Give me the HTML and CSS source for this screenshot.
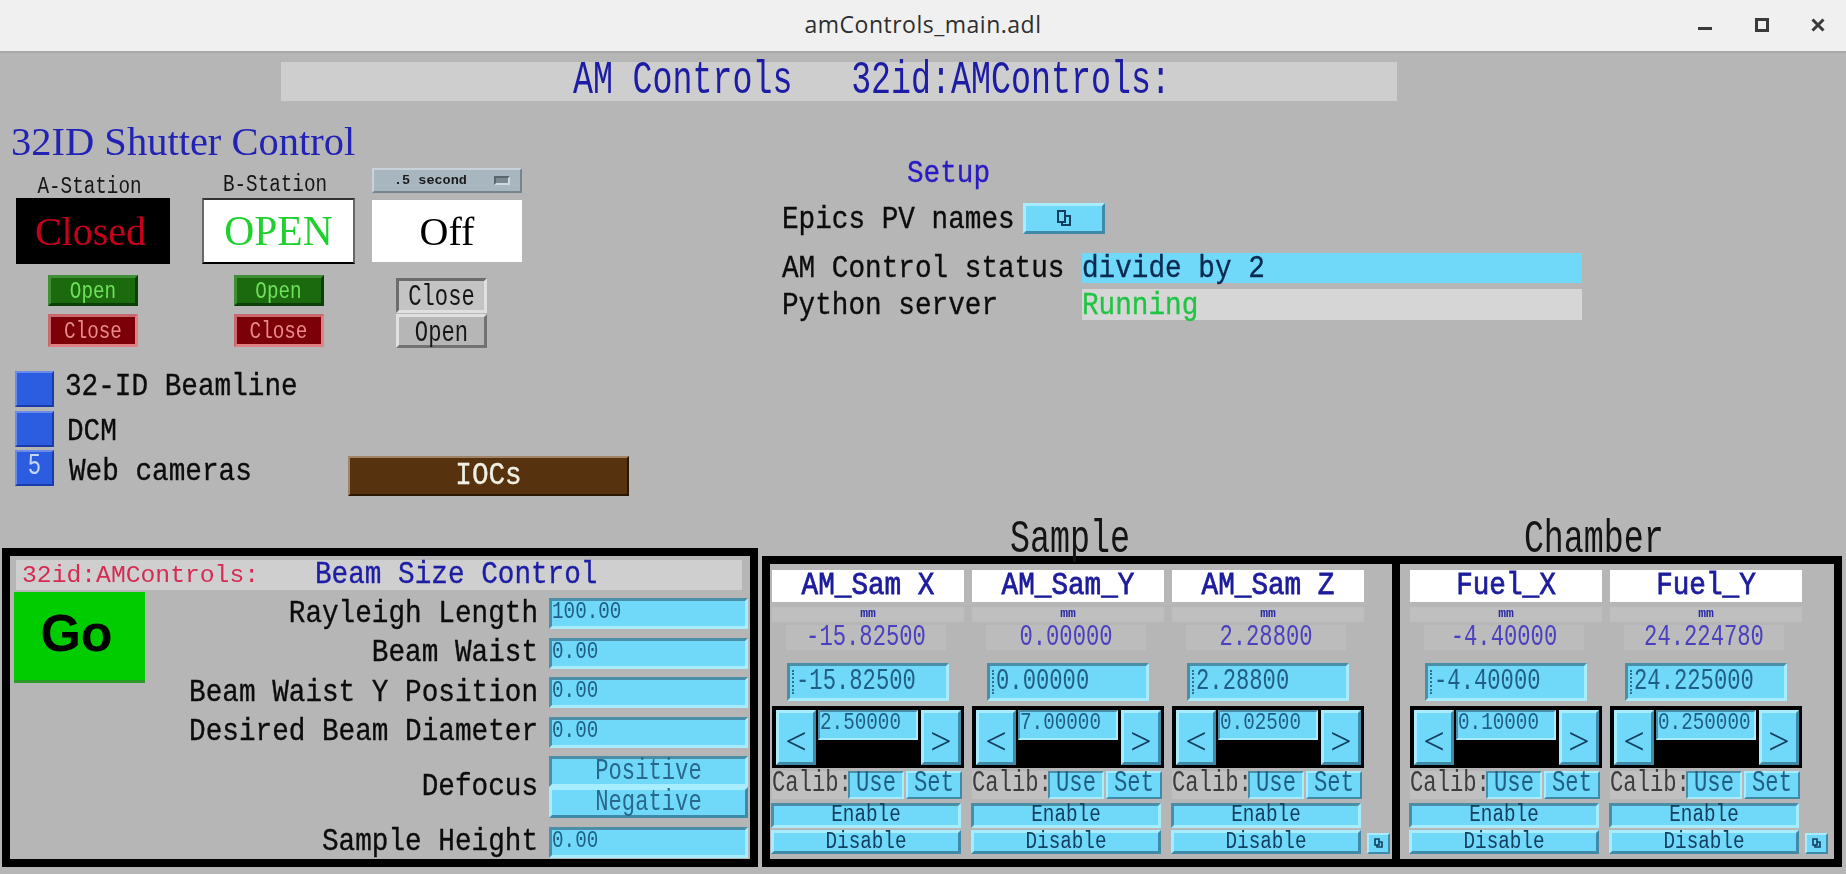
FILE: index.html
```html
<!DOCTYPE html>
<html>
	<head>
		<title>amControls_main.adl</title>
		<link rel="stylesheet" href="styles.css">
	</head>
	<body>
		<div class="titlebar">
			<span class="title-text">amControls_main.adl</span>
			<div class="win-buttons">
				<svg width="14" height="14" viewBox="0 0 14 14"><rect x="0" y="9" width="14" height="3" fill="#3a3a3a"/></svg>
				<svg width="14" height="14" viewBox="0 0 14 14"><rect x="1.5" y="1.5" width="11" height="11" fill="none" stroke="#3a3a3a" stroke-width="3"/></svg>
				<svg width="14" height="14" viewBox="0 0 14 14"><path d="M1.5 1.5 12.5 12.5M12.5 1.5 1.5 12.5" stroke="#3a3a3a" stroke-width="3"/></svg>
			</div>
		</div>

		<div class="screen">
			<div class="banner"><span class="txt txt-xl">AM Controls   32id:AMControls:</span></div>

			<div class="upper">
				<div class="upper-left">
					<h1 class="shutter-title">32ID Shutter Control</h1>
					<div class="stations">
						<div class="station station-a">
							<div class="station-label"><span class="txt txt-s">A-Station</span></div>
							<div class="status-box box-closed">Closed</div>
							<div class="btn btn-green"><span class="txt txt-s">Open</span></div>
							<div class="btn btn-red"><span class="txt txt-s">Close</span></div>
						</div>
						<div class="station station-b">
							<div class="station-label"><span class="txt txt-s">B-Station</span></div>
							<div class="status-box box-open">OPEN</div>
							<div class="btn btn-green"><span class="txt txt-s">Open</span></div>
							<div class="btn btn-red"><span class="txt txt-s">Close</span></div>
						</div>
						<div class="station station-c">
							<div class="time-menu">
								<span class="time-text">.5 second</span>
								<span class="menu-mark"></span>
							</div>
							<div class="status-box box-off">Off</div>
							<div class="btn btn-grey btn-grey-in"><span class="txt txt-m">Close</span></div>
							<div class="btn btn-grey"><span class="txt txt-m">Open</span></div>
						</div>
					</div>
					<div class="links">
						<div class="link-list">
							<div class="link-row">
								<div class="blue-btn"></div>
								<span class="link-label link-label-1"><span class="txt txt-l">32-ID Beamline</span></span>
							</div>
							<div class="link-row link-row-mid">
								<div class="blue-btn"></div>
								<span class="link-label link-label-2"><span class="txt txt-l">DCM</span></span>
							</div>
							<div class="link-row">
								<div class="blue-btn"><span class="txt txt-m">5</span></div>
								<span class="link-label link-label-3"><span class="txt txt-l">Web cameras</span></span>
							</div>
						</div>
						<div class="iocs-btn"><span class="txt txt-l">IOCs</span></div>
					</div>
				</div>

				<div class="setup">
					<div class="setup-title"><span class="txt txt-l">Setup</span></div>
					<div class="setup-row setup-epics">
						<div class="setup-label setup-label-short"><span class="txt txt-l">Epics PV names</span></div>
						<div class="cyan-out setup-btn">
							<svg width="20" height="20" viewBox="0 0 20 20"><path d="M4 2h7v11H4zM11 7h5v9H8v-3" fill="none" stroke="#123e60" stroke-width="2"/></svg>
						</div>
					</div>
					<div class="setup-row setup-status">
						<div class="setup-label"><span class="txt txt-l">AM Control status</span></div>
						<div class="field field-cyan"><span class="txt txt-l">divide by 2</span></div>
					</div>
					<div class="setup-row setup-python">
						<div class="setup-label"><span class="txt txt-l">Python server</span></div>
						<div class="field field-grey"><span class="txt txt-l">Running</span></div>
					</div>
				</div>
			</div>

			<div class="lower">
				<div class="beam-panel">
					<div class="beam-head">
						<span class="beam-prefix">32id:AMControls:</span>
						<span class="beam-name"><span class="txt txt-l">Beam Size Control</span></span>
					</div>
					<div class="beam-body">
						<div class="go-btn">Go</div>
						<div class="beam-form">
							<div class="form-label"><span class="txt txt-l">Rayleigh Length</span></div>
							<div class="cyan-in form-input"><span class="txt txt-s">100.00</span></div>
							<div class="form-label"><span class="txt txt-l">Beam Waist</span></div>
							<div class="cyan-in form-input"><span class="txt txt-s">0.00</span></div>
							<div class="form-label"><span class="txt txt-l">Beam Waist Y Position</span></div>
							<div class="cyan-in form-input"><span class="txt txt-s">0.00</span></div>
							<div class="form-label"><span class="txt txt-l">Desired Beam Diameter</span></div>
							<div class="cyan-in form-input"><span class="txt txt-s">0.00</span></div>
							<div class="form-label"><span class="txt txt-l">Defocus</span></div>
							<div class="defocus">
								<div class="cyan-in defocus-btn"><span class="txt txt-m">Positive</span></div>
								<div class="cyan-out defocus-btn"><span class="txt txt-m">Negative</span></div>
							</div>
							<div class="form-label"><span class="txt txt-l">Sample Height</span></div>
							<div class="cyan-in form-input"><span class="txt txt-s">0.00</span></div>
						</div>
					</div>
				</div>

				<div class="motors">
					<div class="motor-headings">
						<div class="heading heading-sample"><span class="txt txt-xl">Sample</span></div>
						<div class="heading heading-chamber"><span class="txt txt-xl">Chamber</span></div>
					</div>
					<div class="motor-panel">
						<div class="motor-group group-sample">
							<div class="motor">
								<div class="motor-name"><span class="txt txt-l">AM_Sam X</span></div>
								<div class="motor-units">mm</div>
								<div class="motor-rbv"><span class="txt txt-m">-15.82500</span></div>
								<div class="cyan-in motor-input"><span class="cursor"></span><span class="txt txt-m">-15.82500</span></div>
								<div class="tweak">
									<div class="cyan-out tweak-btn">&lt;</div>
									<div class="cyan-in tweak-val"><span class="txt txt-s">2.50000</span></div>
									<div class="cyan-out tweak-btn">&gt;</div>
								</div>
								<div class="calib">
									<div class="calib-label"><span class="txt txt-m">Calib:</span></div>
									<div class="cyan-in calib-btn"><span class="txt txt-m">Use</span></div>
									<div class="cyan-out calib-btn calib-set"><span class="txt txt-m">Set</span></div>
								</div>
								<div class="cyan-in wide-btn btn-enable"><span class="txt txt-s">Enable</span></div>
								<div class="cyan-out wide-btn btn-disable"><span class="txt txt-s">Disable</span></div>
							</div>
							<div class="motor">
								<div class="motor-name"><span class="txt txt-l">AM_Sam_Y</span></div>
								<div class="motor-units">mm</div>
								<div class="motor-rbv"><span class="txt txt-m">0.00000</span></div>
								<div class="cyan-in motor-input"><span class="cursor"></span><span class="txt txt-m">0.00000</span></div>
								<div class="tweak">
									<div class="cyan-out tweak-btn">&lt;</div>
									<div class="cyan-in tweak-val"><span class="txt txt-s">7.00000</span></div>
									<div class="cyan-out tweak-btn">&gt;</div>
								</div>
								<div class="calib">
									<div class="calib-label"><span class="txt txt-m">Calib:</span></div>
									<div class="cyan-in calib-btn"><span class="txt txt-m">Use</span></div>
									<div class="cyan-out calib-btn calib-set"><span class="txt txt-m">Set</span></div>
								</div>
								<div class="cyan-in wide-btn btn-enable"><span class="txt txt-s">Enable</span></div>
								<div class="cyan-out wide-btn btn-disable"><span class="txt txt-s">Disable</span></div>
							</div>
							<div class="motor">
								<div class="motor-name"><span class="txt txt-l">AM_Sam Z</span></div>
								<div class="motor-units">mm</div>
								<div class="motor-rbv"><span class="txt txt-m">2.28800</span></div>
								<div class="cyan-in motor-input"><span class="cursor"></span><span class="txt txt-m">2.28800</span></div>
								<div class="tweak">
									<div class="cyan-out tweak-btn">&lt;</div>
									<div class="cyan-in tweak-val"><span class="txt txt-s">0.02500</span></div>
									<div class="cyan-out tweak-btn">&gt;</div>
								</div>
								<div class="calib">
									<div class="calib-label"><span class="txt txt-m">Calib:</span></div>
									<div class="cyan-in calib-btn"><span class="txt txt-m">Use</span></div>
									<div class="cyan-out calib-btn calib-set"><span class="txt txt-m">Set</span></div>
								</div>
								<div class="cyan-in wide-btn btn-enable"><span class="txt txt-s">Enable</span></div>
								<div class="cyan-out wide-btn btn-disable"><span class="txt txt-s">Disable</span></div>
							</div>
							<div class="cyan-out small-btn">
								<svg width="11" height="11" viewBox="0 0 11 11"><path d="M2 1h4v6H2zM6 4h3v5H4V7" fill="none" stroke="#123e60" stroke-width="1.6"/></svg>
							</div>
						</div>
						<div class="motor-group group-chamber">
							<div class="motor">
								<div class="motor-name"><span class="txt txt-l">Fuel_X</span></div>
								<div class="motor-units">mm</div>
								<div class="motor-rbv"><span class="txt txt-m">-4.40000</span></div>
								<div class="cyan-in motor-input"><span class="cursor"></span><span class="txt txt-m">-4.40000</span></div>
								<div class="tweak">
									<div class="cyan-out tweak-btn">&lt;</div>
									<div class="cyan-in tweak-val"><span class="txt txt-s">0.10000</span></div>
									<div class="cyan-out tweak-btn">&gt;</div>
								</div>
								<div class="calib">
									<div class="calib-label"><span class="txt txt-m">Calib:</span></div>
									<div class="cyan-in calib-btn"><span class="txt txt-m">Use</span></div>
									<div class="cyan-out calib-btn calib-set"><span class="txt txt-m">Set</span></div>
								</div>
								<div class="cyan-in wide-btn btn-enable"><span class="txt txt-s">Enable</span></div>
								<div class="cyan-out wide-btn btn-disable"><span class="txt txt-s">Disable</span></div>
							</div>
							<div class="motor">
								<div class="motor-name"><span class="txt txt-l">Fuel_Y</span></div>
								<div class="motor-units">mm</div>
								<div class="motor-rbv"><span class="txt txt-m">24.224780</span></div>
								<div class="cyan-in motor-input"><span class="cursor"></span><span class="txt txt-m">24.225000</span></div>
								<div class="tweak">
									<div class="cyan-out tweak-btn">&lt;</div>
									<div class="cyan-in tweak-val"><span class="txt txt-s">0.250000</span></div>
									<div class="cyan-out tweak-btn">&gt;</div>
								</div>
								<div class="calib">
									<div class="calib-label"><span class="txt txt-m">Calib:</span></div>
									<div class="cyan-in calib-btn"><span class="txt txt-m">Use</span></div>
									<div class="cyan-out calib-btn calib-set"><span class="txt txt-m">Set</span></div>
								</div>
								<div class="cyan-in wide-btn btn-enable"><span class="txt txt-s">Enable</span></div>
								<div class="cyan-out wide-btn btn-disable"><span class="txt txt-s">Disable</span></div>
							</div>
							<div class="cyan-out small-btn">
								<svg width="11" height="11" viewBox="0 0 11 11"><path d="M2 1h4v6H2zM6 4h3v5H4V7" fill="none" stroke="#123e60" stroke-width="1.6"/></svg>
							</div>
						</div>
					</div>
				</div>
			</div>
		</div>
	</body>
</html>
```

FILE: styles.css
```css
* {
	box-sizing: border-box;
}
html,body {
	width: 100%;
	height: 100%;
}
body {
	margin: 0;
	overflow: hidden;
	background-color: #b6b6b6;
	color: #000;
	font-family: "Liberation Mono", monospace;
	filter: blur(0.5px);
}

/* text from the control screen is narrow and tall, so it gets stretched */
.txt {
	display: inline-block;
	white-space: pre;
	line-height: 1;
}
.txt-s {
	font-size: 19.3px;
	transform: scaleY(1.25);
}
.txt-m {
	font-size: 22.2px;
	transform: scaleY(1.35);
}
.txt-l {
	font-size: 27.7px;
	transform: scaleY(1.15);
	-webkit-text-stroke: 0.3px currentColor;
}
.txt-xl {
	font-size: 33.3px;
	transform: scaleY(1.38);
	word-spacing: -0.4px;
}

/* window title */
.titlebar {
	height: 53px;
	background-color: #f0f0f0;
	border-bottom: 2px solid #a9a9a9;
	display: flex;
	align-items: center;
	justify-content: center;
	position: relative;
}
.title-text {
	font-family: "Open Sans", sans-serif;
	font-size: 23px;
	letter-spacing: 0.5px;
	color: #2e2e2e;
	margin-top: -3px;
}
.win-buttons {
	position: absolute;
	top: 18px;
	right: 21px;
	display: flex;
	gap: 42.5px;
}

.banner {
	margin: 9px 0 0 281px;
	width: 1116px;
	height: 39px;
	background-color: #cecece;
	color: #1c1ca4;
	display: flex;
	align-items: center;
	padding-left: 292px;
}

/* top half */
.upper {
	height: 414px;
	display: flex;
}
.upper-left {
	width: 782px;
	padding-left: 16px;
}
.shutter-title {
	margin: 21px 0 0 -5px;
	height: 40px;
	font-family: "Liberation Serif", serif;
	font-weight: normal;
	font-size: 40.5px;
	line-height: 40px;
	color: #2222b4;
	white-space: nowrap;
}
.stations {
	margin-top: 6px;
	display: flex;
}
.station {
	display: flex;
	flex-direction: column;
	align-items: center;
}
.station-a {
	width: 154px;
	margin-right: 32px;
}
.station-b {
	width: 153px;
	margin-right: 17px;
}
.station-c {
	width: 150px;
}
.station-label {
	height: 30px;
	padding-top: 8px;
	margin-right: 7px;
	color: #161616;
}
.station-a .station-label {
	padding-top: 10px;
}
.status-box {
	width: 100%;
	height: 66px;
	font-family: "Liberation Serif", serif;
	font-size: 40px;
	display: flex;
	align-items: center;
	justify-content: center;
}
.box-closed {
	background-color: #000;
	color: #c4001c;
	padding-right: 5px;
}
.box-open {
	background-color: #fff;
	color: #1fd02f;
	font-size: 41.5px;
	border: 2px solid #000;
	border-top-color: #333;
	border-left-color: #666;
	border-right-color: #666;
}
.box-off {
	background-color: #fff;
	color: #000;
	height: 62px;
	margin-top: 7px;
}
.time-menu {
	width: 100%;
	height: 25px;
	background-color: #a8b6c0;
	border: 2px solid;
	border-color: #c8d2d8 #76848e #76848e #c8d2d8;
	display: flex;
	align-items: center;
	padding: 0 10px 0 20px;
	justify-content: space-between;
}
.time-text {
	font-size: 13.5px;
	font-weight: bold;
	white-space: pre;
	color: #1a1a1a;
}
.menu-mark {
	width: 16px;
	height: 9px;
	background-color: #7c8890;
	border: 2px solid;
	border-color: #5a666e #d0d8de #d0d8de #5a666e;
}
.btn {
	height: 32px;
	width: 90px;
	border: 3px solid;
	display: flex;
	align-items: center;
	justify-content: center;
	padding-top: 4px;
}
.btn-green {
	margin-top: 11px;
	height: 31px;
	background-color: #1b6a0e;
	border-color: #3f8f35 #0c3e08 #0c3e08 #3f8f35;
	color: #6fe05c;
}
.btn-red {
	margin-top: 8px;
	height: 33px;
	background-color: #7c0008;
	border-color: #c8686c #e08084 #e08084 #c8686c;
	color: #e88a8c;
}
.btn-grey {
	width: 91px;
	height: 34px;
	margin: 1px 11px 0 0;
	background-color: #b6b6b6;
	border-color: #e0e0e0 #727272 #727272 #e0e0e0;
	color: #161616;
	padding-top: 6px;
}
.btn-grey-in {
	height: 35px;
	margin-top: 16px;
	background-color: #c4c4c4;
	border-color: #6c6c6c #e0e0e0 #e0e0e0 #6c6c6c;
}
.links {
	margin-top: 23px;
	display: flex;
}
.link-list {
	width: 333px;
	margin-left: -1px;
}
.link-row {
	height: 36px;
	margin-bottom: 4px;
	display: flex;
}
.link-row-mid {
	margin-bottom: 3px;
}
.blue-btn {
	width: 39px;
	height: 36px;
	background-color: #2c5ce0;
	border: 2px solid;
	border-color: #6a8ce8 #1a3ca8 #1a3ca8 #6a8ce8;
	color: #c4d8ff;
	text-align: center;
	padding-top: 4px;
}
.link-label {
	color: #0c0c0c;
}
.link-label-1 {
	margin: 2px 0 0 11px;
}
.link-label-2 {
	margin: 7px 0 0 13px;
}
.link-label-3 {
	margin: 8px 0 0 15px;
}
.iocs-btn {
	margin-top: 85px;
	width: 281px;
	height: 40px;
	background-color: #56320f;
	border: 2px solid;
	border-color: #a08468 #2a1604 #2a1604 #a08468;
	color: #f2f0e4;
	display: flex;
	align-items: center;
	justify-content: center;
}

/* setup block */
.setup {
	width: 800px;
}
.setup-title {
	margin: 59px 0 0 125px;
	height: 27px;
	color: #2a1ac4;
}
.setup-row {
	display: flex;
	align-items: center;
}
.setup-epics {
	margin-top: 16px;
	height: 31px;
}
.setup-status {
	margin-top: 19px;
	height: 30px;
}
.setup-python {
	margin-top: 6px;
	height: 31px;
}
.setup-label {
	width: 300px;
	color: #0c0c0c;
	padding-top: 2px;
}
.setup-label-short {
	width: 241px;
}
.setup-btn {
	width: 82px;
	height: 31px;
	display: flex;
	align-items: center;
	justify-content: center;
}
.field {
	width: 500px;
	height: 100%;
	display: flex;
	align-items: center;
	padding-top: 2px;
}
.field-cyan {
	background-color: #70d8f8;
	color: #0a2a50;
}
.field-grey {
	background-color: #d6d6d6;
	color: #20c444;
}

/* cyan widgets: in is a text entry, out is a button */
.cyan-in, .cyan-out {
	background-color: #70d8f8;
	border: 3px solid;
}
.cyan-in {
	border-color: #4a8ea8 #a8ecff #a8ecff #4a8ea8;
	color: #1f5f85;
}
.cyan-out {
	border-color: #a8ecff #3f8aa8 #3f8aa8 #a8ecff;
	color: #123e60;
}

/* bottom half */
.lower {
	height: 352px;
	display: flex;
	align-items: flex-end;
	padding-left: 2px;
}
.beam-panel {
	width: 756px;
	height: 319px;
	border: 8px solid #000;
	padding: 4px 0 0 6px;
}
.beam-head {
	width: 726px;
	height: 30px;
	background-color: #cfcfcf;
	display: flex;
	align-items: center;
	padding-left: 6px;
}
.beam-prefix {
	width: 293px;
	font-size: 24.7px;
	color: #d62a52;
}
.beam-name {
	color: #1c1ca4;
}
.beam-body {
	display: flex;
	margin-top: 2px;
}
.go-btn {
	width: 131px;
	height: 91px;
	margin-left: -2px;
	background-color: #00cc00;
	border-bottom: 3px solid #2a9a2a;
	font-family: "Liberation Sans", sans-serif;
	font-weight: bold;
	font-size: 52px;
	display: flex;
	align-items: center;
	justify-content: center;
	padding-right: 6px;
	padding-bottom: 6px;
}
.beam-form {
	width: 603px;
	margin-top: 6px;
	display: grid;
	grid-template-columns: 1fr 199px;
	column-gap: 11px;
	row-gap: 8.5px;
}
.form-label {
	align-self: center;
	text-align: right;
	color: #0c0c0c;
	height: 28px;
}
.form-input {
	height: 31px;
	padding-left: 0;
	line-height: 24px;
}
.defocus-btn {
	height: 31px;
	display: flex;
	align-items: center;
	justify-content: center;
	color: #28688c;
	padding-top: 2px;
}
.motors {
	width: 1080px;
	margin-left: 4px;
}
.motor-headings {
	height: 41px;
	display: flex;
	color: #141414;
}
.heading {
	padding-top: 9px;
}
.heading-sample {
	margin-left: 248px;
}
.heading-chamber {
	margin-left: 394px;
}
.motor-panel {
	height: 311px;
	border: 8px solid #000;
	display: flex;
}
.motor-group {
	display: flex;
	align-items: flex-start;
	height: 100%;
}
.group-sample {
	width: 630px;
	padding-left: 2px;
	border-right: 8px solid #000;
	gap: 8px;
}
.group-chamber {
	padding-left: 10px;
	gap: 8px;
}
.motor {
	width: 192px;
	display: flex;
	flex-direction: column;
}
.motor-name {
	height: 32px;
	margin-top: 6px;
	background-color: #fff;
	color: #1c1c9c;
	text-align: center;
	padding-top: 2px;
}
.motor-name .txt {
	-webkit-text-stroke: 0.7px currentColor;
}
.motor-units {
	height: 15px;
	margin-top: 5px;
	background-color: #bfbfbf;
	color: #2a2aa8;
	font-size: 13px;
	font-weight: bold;
	line-height: 13px;
	text-align: center;
}
.motor-rbv {
	width: 160px;
	height: 25px;
	margin: 3px 0 0 14px;
	background-color: #bcbcbc;
	color: #4a40c0;
	text-align: center;
	line-height: 28px;
}
.motor-input {
	width: 162px;
	height: 38px;
	margin: 13px 0 0 15px;
	padding-left: 6px;
	display: flex;
	align-items: center;
	position: relative;
}
.cursor {
	position: absolute;
	top: 4px;
	left: 2px;
	height: 24px;
	border-left: 2px dotted #2f6f8f;
}
.tweak {
	height: 62px;
	margin-top: 5px;
	background-color: #000;
	padding: 4px 3px 3px 4px;
	display: flex;
	align-items: flex-start;
}
.tweak-btn {
	width: 40px;
	height: 55px;
	font-family: "Liberation Serif", serif;
	font-size: 38px;
	line-height: 56px;
	text-align: center;
}
.tweak-val {
	width: 100px;
	height: 30px;
	margin: 0 3px 0 2px;
	padding-left: 0;
	line-height: 24px;
	border-width: 2px;
}
.calib {
	height: 28px;
	margin-top: 3px;
	display: flex;
}
.calib-label {
	width: 76px;
	background-color: #c0c0c0;
	color: #3c3c3c;
	line-height: 28px;
}
.calib-btn {
	width: 56px;
	text-align: center;
	line-height: 22px;
	margin-right: 2px;
	border-width: 2px;
	color: #1f5f85;
}
.wide-btn {
	width: 190px;
	text-align: center;
	margin-left: -1px;
	line-height: 17px;
	color: #123e60;
}
.btn-enable {
	height: 25px;
	margin-top: 4px;
}
.btn-disable {
	height: 24px;
	margin-top: 2px;
}
.small-btn {
	align-self: flex-end;
	width: 23px;
	height: 21px;
	margin: 0 0 5px -5px;
	border-width: 2px;
	display: flex;
	align-items: center;
	justify-content: center;
}
```
